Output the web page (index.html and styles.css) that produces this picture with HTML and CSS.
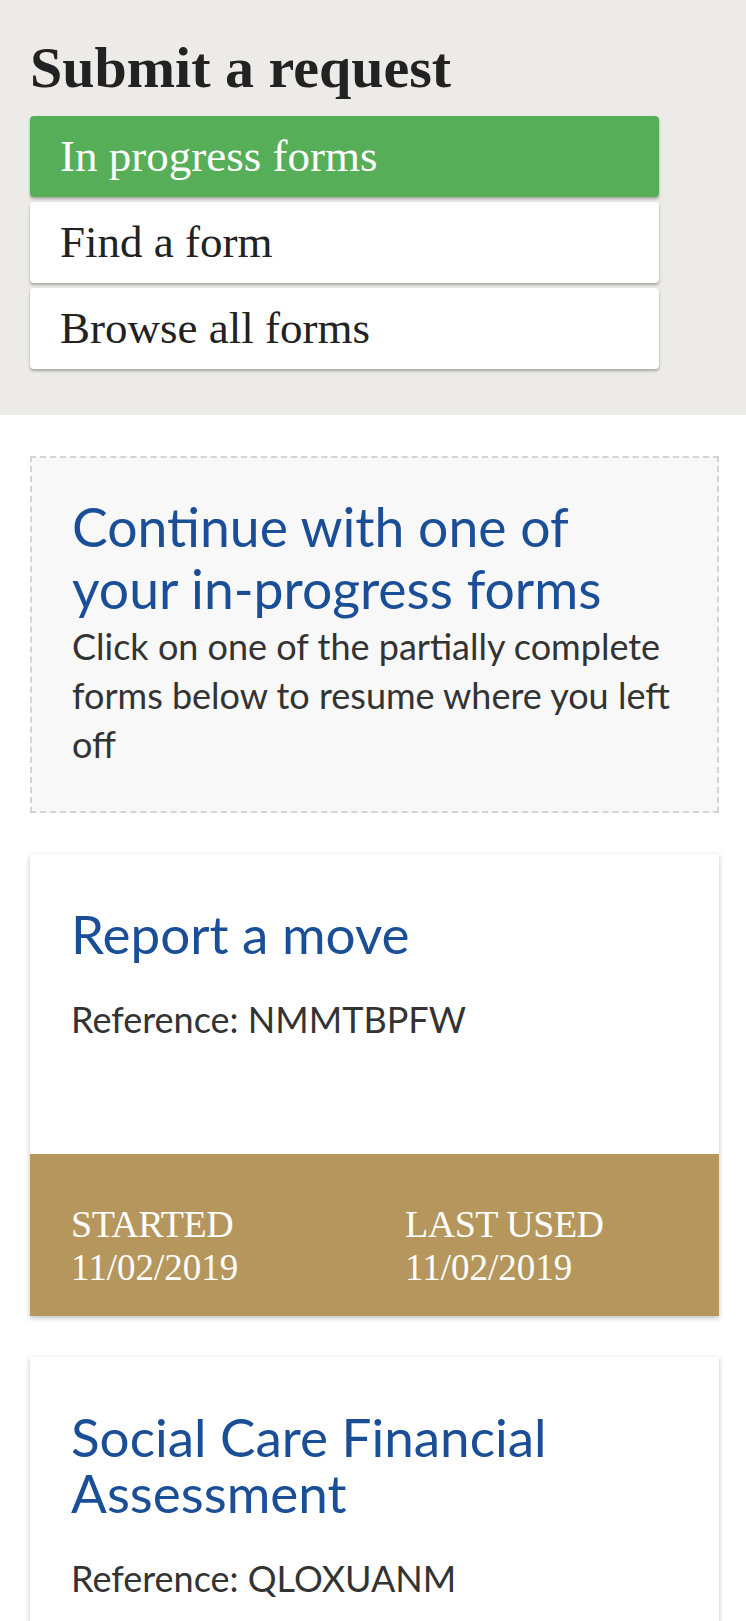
FILE: index.html
```html
<!DOCTYPE html>
<html lang="en">
  <head>
    <meta charset="UTF-8" />
    <meta name="viewport" content="width=device-width, initial-scale=1.0" />
    <title>Submit a request</title>
    <link rel="stylesheet" href="styles.css">
  </head>
  <body>
    <div class="top-panel">
      <h1 class="page-title">Submit a request</h1>
      <nav class="form-nav">
        <a href="#" class="nav-item active">In progress forms</a>
        <a href="#" class="nav-item">Find a form</a>
        <a href="#" class="nav-item">Browse all forms</a>
      </nav>
    </div>

    <div class="contents">
      <div class="intro-box">
        <h2>Continue with one of your in-progress forms</h2>
        <p>Click on one of the partially complete forms below to resume where you left off</p>
      </div>

      <div class="form-card">
        <div class="card-body">
          <h3>Report a move</h3>
          <p class="ref">Reference: NMMTBPFW</p>
        </div>
        <div class="card-footer">
          <div class="date-item first">
            <span class="date-label">Started</span>
            <span class="date-value">11/02/2019</span>
          </div>
          <div class="date-item">
            <span class="date-label">Last used</span>
            <span class="date-value">11/02/2019</span>
          </div>
        </div>
      </div>

      <div class="form-card">
        <div class="card-body">
          <h3>Social Care Financial Assessment</h3>
          <p class="ref">Reference: QLOXUANM</p>
        </div>
      </div>
    </div>
  </body>
</html>
```

FILE: styles.css
```css
body {
  margin: 0;
  font-family: Lato, "Open Sans", sans-serif;
  color: #333;
  background: #fff;
}

.top-panel {
  background-color: #edebe8;
  padding: 35px 30px 46px 30px;
}

.page-title {
  font-family: "Liberation Serif", serif;
  font-weight: bold;
  font-size: 58px;
  line-height: 65px;
  color: #222;
  margin: 0 0 16px 0;
}

.form-nav {
  display: flex;
  flex-direction: column;
  gap: 5px;
  width: 629px;
}

.nav-item {
  display: block;
  height: 81px;
  line-height: 80px;
  padding: 0 30px;
  background: #fff;
  color: #222;
  text-decoration: none;
  font-family: "Liberation Serif", serif;
  font-size: 45px;
  border-radius: 4px;
  box-shadow: 0 2px 3px rgba(0, 0, 0, 0.3);
}

.nav-item.active {
  background: #56ae59;
  color: #fff;
}

.contents {
  margin: 41px 27px 0 30px;
}

.intro-box {
  background: #f8f8f8;
  border: 2px dashed #d4d4d4;
  padding: 37px 40px 42px 40px;
  margin-bottom: 41px;
}

.intro-box h2 {
  font-size: 53.5px;
  font-weight: normal;
  line-height: 62px;
  color: #1a4e97;
  margin: 0;
  max-width: 570px;
}

.intro-box p {
  font-size: 36px;
  line-height: 49px;
  margin: 3px 0 0 0;
}

.form-card {
  background: #fff;
  box-shadow: 0 2px 5px rgba(0, 0, 0, 0.25);
  margin-bottom: 41px;
}

.card-body {
  box-sizing: border-box;
  min-height: 300px;
  padding: 52px 41px 0 41px;
}

.card-body h3 {
  font-size: 53px;
  font-weight: normal;
  line-height: 56px;
  color: #1a4e97;
  margin: 0 0 33px 0;
}

.ref {
  font-size: 36px;
  line-height: 48px;
  margin: 0;
}

.card-footer {
  background: #b5975d;
  color: #fff;
  display: flex;
  padding: 48px 41px 26px 41px;
  font-family: "Liberation Serif", serif;
}

.date-item {
  display: flex;
  flex-direction: column;
}

.date-item.first {
  width: 334px;
}

.date-label {
  text-transform: uppercase;
  font-size: 38px;
  letter-spacing: -0.5px;
  line-height: 44px;
}

.date-value {
  font-size: 37px;
  line-height: 44px;
}
```
